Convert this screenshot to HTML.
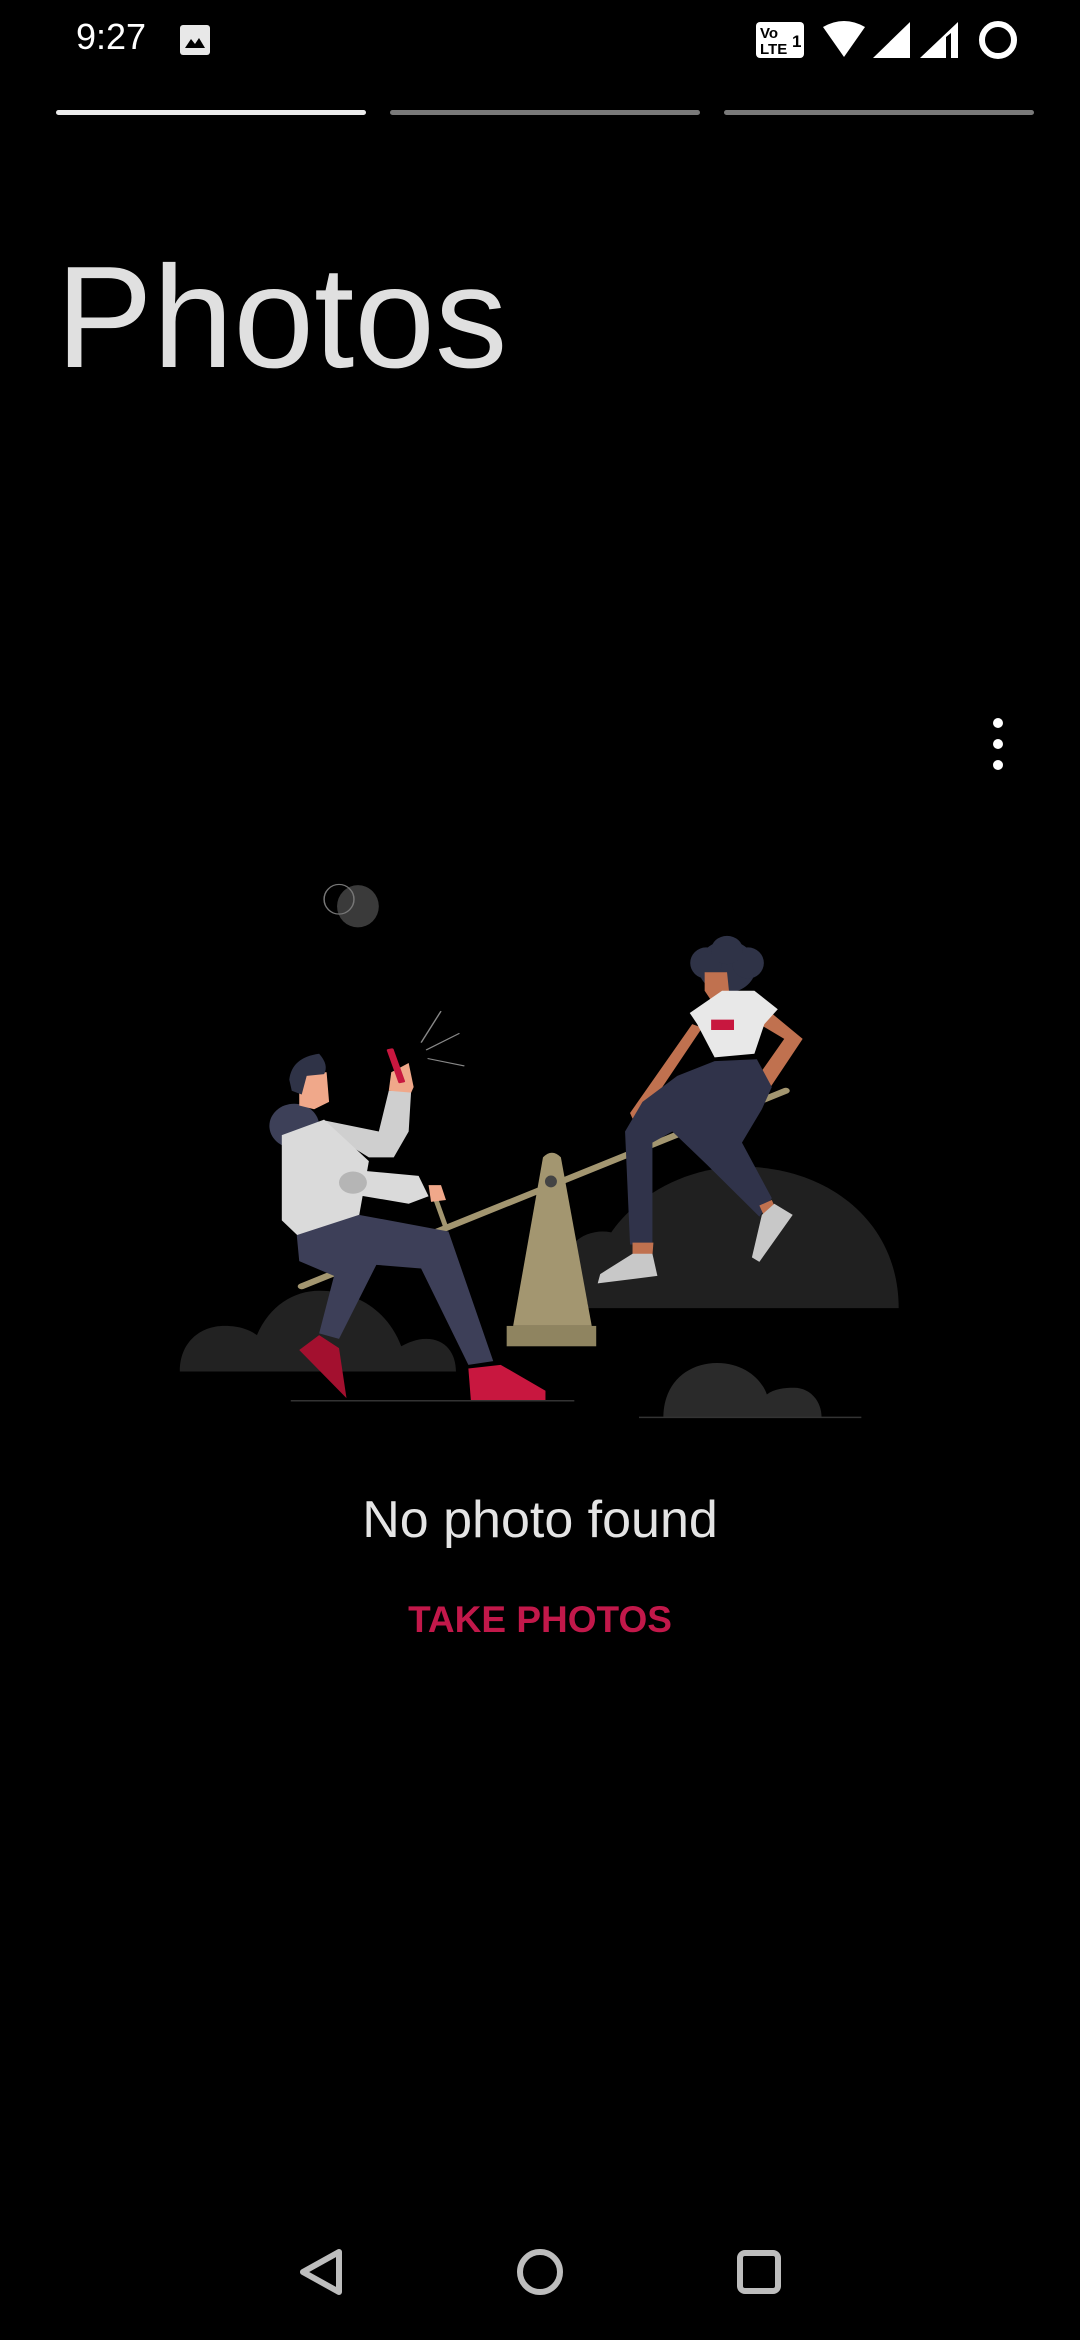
<!DOCTYPE html>
<html><head><meta charset="utf-8"><style>
html,body{margin:0;padding:0;background:#000;}
body{width:1080px;height:2340px;position:relative;overflow:hidden;font-family:"Liberation Sans",sans-serif;}
.abs{position:absolute;}
.bar{position:absolute;top:110px;height:5px;border-radius:3px;background:#7a7a7a;}
</style></head><body>
<div class="abs" style="left:76px;top:16px;color:#fff;font-size:36px;">9:27</div>
<div class="abs" style="left:180px;top:25px;width:30px;height:30px;background:#e8e8e8;border-radius:3px;"></div>
<svg class="abs" style="left:180px;top:25px" width="30" height="30"><path d="M5 23 L11 14 L15 19 L19 13 L25 23Z" fill="#000"/></svg>
<svg class="abs" style="left:750px;top:15px" width="300" height="48">
<rect x="6" y="7" width="48" height="36" rx="4" fill="#fff"/>
<text x="10" y="23" font-size="15" font-weight="bold" fill="#000" font-family="Liberation Sans">Vo</text>
<text x="10" y="39" font-size="15" font-weight="bold" fill="#000" font-family="Liberation Sans">LTE</text>
<text x="42" y="32" font-size="17" font-weight="bold" fill="#000" font-family="Liberation Sans">1</text>
<path d="M73 12 Q94 0 115 12 L94 42Z" fill="#fff"/>
<path d="M123 43 L160 7 L160 43Z" fill="#fff"/>
<path d="M170 43 L208 7 L208 43Z" fill="#fff"/><path d="M196 22 L201 18 L201 43 L196 43Z" fill="#000"/>
<circle cx="248" cy="25" r="16" fill="none" stroke="#fff" stroke-width="6"/>
</svg>
<div class="bar" style="left:56px;width:310px;background:#ececec"></div>
<div class="bar" style="left:390px;width:310px"></div>
<div class="bar" style="left:724px;width:310px"></div>
<div class="abs" style="left:56px;top:242px;color:#e0e0e0;font-size:145px;line-height:150px;">Photos</div>
<div class="abs" style="left:993px;top:718px;width:10px;height:10px;border-radius:5px;background:#fff;box-shadow:0 21px 0 #fff,0 42px 0 #fff;"></div>

<svg class="abs" style="left:150px;top:850px" width="780" height="580" viewBox="0 0 1568 1566" preserveAspectRatio="none">
<ellipse cx="418" cy="152" rx="42" ry="57" fill="#3a3a3a"/>
<ellipse cx="380" cy="133" rx="30" ry="40" fill="none" stroke="#777" stroke-width="3"/>
<ellipse cx="910" cy="1130" rx="80" ry="100" fill="#202020"/>
<path d="M880 1237 C880 1000 1040 855 1190 855 C1360 855 1505 1000 1505 1237Z" fill="#202020"/>
<path d="M60 1408 C60 1330 100 1285 150 1285 C185 1285 205 1300 215 1310 C240 1230 290 1190 340 1190 C420 1190 480 1250 505 1340 C520 1330 535 1320 555 1320 C595 1320 615 1360 615 1408Z" fill="#222"/>
<path d="M1032 1532 C1032 1440 1080 1385 1140 1385 C1195 1385 1230 1430 1240 1470 C1255 1455 1275 1452 1295 1452 C1325 1452 1350 1485 1350 1532Z" fill="#2a2a2a"/>
<line x1="283" y1="1487" x2="853" y2="1487" stroke="#333" stroke-width="4"/>
<line x1="983" y1="1532" x2="1430" y2="1532" stroke="#333" stroke-width="4"/>
<path d="M790 830 Q808 805 826 830 L888 1285 L730 1285Z" fill="#a39670"/>
<rect x="717" y="1285" width="180" height="55" fill="#8f8460"/>
<line x1="305" y1="1178" x2="1278" y2="650" stroke="#a39670" stroke-width="16" stroke-linecap="round"/>
<polyline points="575,945 595,1020" stroke="#a39670" stroke-width="10" fill="none"/>
<polyline points="985,720 1000,800" stroke="#a39670" stroke-width="10" fill="none"/>
<ellipse cx="806" cy="895" rx="12" ry="16" fill="#444"/>
<g stroke="#888" stroke-width="3"><line x1="545" y1="520" x2="585" y2="435"/><line x1="555" y1="540" x2="622" y2="495"/><line x1="558" y1="563" x2="632" y2="583"/></g>
<ellipse cx="290" cy="745" rx="50" ry="60" fill="#3d4058"/>
<path d="M300 600 L355 600 L360 680 L330 700 L300 690Z" fill="#f0a88a"/>
<path d="M280 620 Q285 560 340 550 Q360 580 350 605 L315 610 L305 660 L285 650Z" fill="#2f3347"/>
<path d="M350 730 L460 760 L480 650 L525 650 L520 760 L490 830 L440 830 L380 780Z" fill="#cfcfcf"/>
<path d="M480 650 L485 600 L520 575 L530 640 L525 655Z" fill="#f0a88a"/>
<rect x="488" y="535" width="14" height="95" rx="3" transform="rotate(-15 495 585)" fill="#c8173f"/>
<path d="M265 770 L350 728 L440 840 L420 990 L300 1045 L265 1000Z" fill="#dadada"/>
<path d="M380 860 L540 880 L560 935 L520 955 L410 930Z" fill="#dadada"/>
<ellipse cx="408" cy="898" rx="28" ry="30" fill="#b5b5b5"/>
<path d="M560 905 L585 905 L595 945 L565 950Z" fill="#f0a88a"/>
<path d="M295 1040 L420 985 L600 1030 L690 1380 L640 1390 L545 1130 L455 1120 L380 1320 L340 1305 L370 1150 L300 1110Z" fill="#3d3f58"/>
<path d="M340 1310 L380 1345 L395 1480 L300 1350Z" fill="#a3102f"/>
<path d="M640 1400 L705 1390 L795 1460 L795 1485 L645 1485Z" fill="#c8173f"/>
<g fill="#2f3347"><ellipse cx="1160" cy="315" rx="58" ry="70"/><ellipse cx="1118" cy="305" rx="32" ry="42"/><ellipse cx="1202" cy="305" rx="32" ry="42"/><ellipse cx="1160" cy="270" rx="32" ry="38"/></g>
<path d="M1115 330 L1160 330 L1165 395 L1130 410 L1115 380Z" fill="#c0714f"/>
<path d="M1090 470 L1110 480 L1000 700 L975 740 L965 710Z" fill="#c0714f"/>
<path d="M1240 430 L1312 510 L1245 645 L1215 625 L1275 510 L1225 470Z" fill="#c0714f"/>
<path d="M1085 440 L1150 380 L1215 380 L1262 430 L1235 470 L1215 550 L1135 560 L1100 470Z" fill="#e8e8e8"/>
<rect x="1128" y="458" width="46" height="28" fill="#c8173f"/>
<path d="M1135 570 L1220 565 L1250 640 L1230 700 L1190 790 L1250 940 L1225 990 L1120 850 L1050 760 L1010 790 L1010 1065 L965 1065 L955 760 L990 680 L1060 610Z" fill="#30334a"/>
<path d="M970 1060 L1012 1060 L1010 1095 L970 1095Z" fill="#c0714f"/>
<path d="M1225 960 L1250 945 L1260 975 L1235 990Z" fill="#c0714f"/>
<path d="M970 1090 L1010 1090 L1020 1150 L900 1170 L905 1145Z" fill="#c8c8c8"/>
<path d="M1230 985 L1255 955 L1292 985 L1225 1112 L1210 1100Z" fill="#c8c8c8"/>
</svg>

<div class="abs" style="left:0;width:1080px;top:1490px;text-align:center;color:#e4e4e4;font-size:52px;line-height:60px;">No photo found</div>
<div class="abs" style="left:0;width:1080px;top:1596px;text-align:center;color:#c2184a;font-size:37px;font-weight:bold;line-height:48px;">TAKE PHOTOS</div>

<svg class="abs" style="left:0;top:2230px" width="1080" height="90">
<path d="M339 22 L339 62 L303 42Z" fill="none" stroke="#bdbdbd" stroke-width="6" stroke-linejoin="round"/>
<circle cx="540" cy="42" r="20" fill="none" stroke="#bdbdbd" stroke-width="6"/>
<rect x="740" y="23" width="38" height="38" rx="5" fill="none" stroke="#bdbdbd" stroke-width="6"/>
</svg>
</body></html>
